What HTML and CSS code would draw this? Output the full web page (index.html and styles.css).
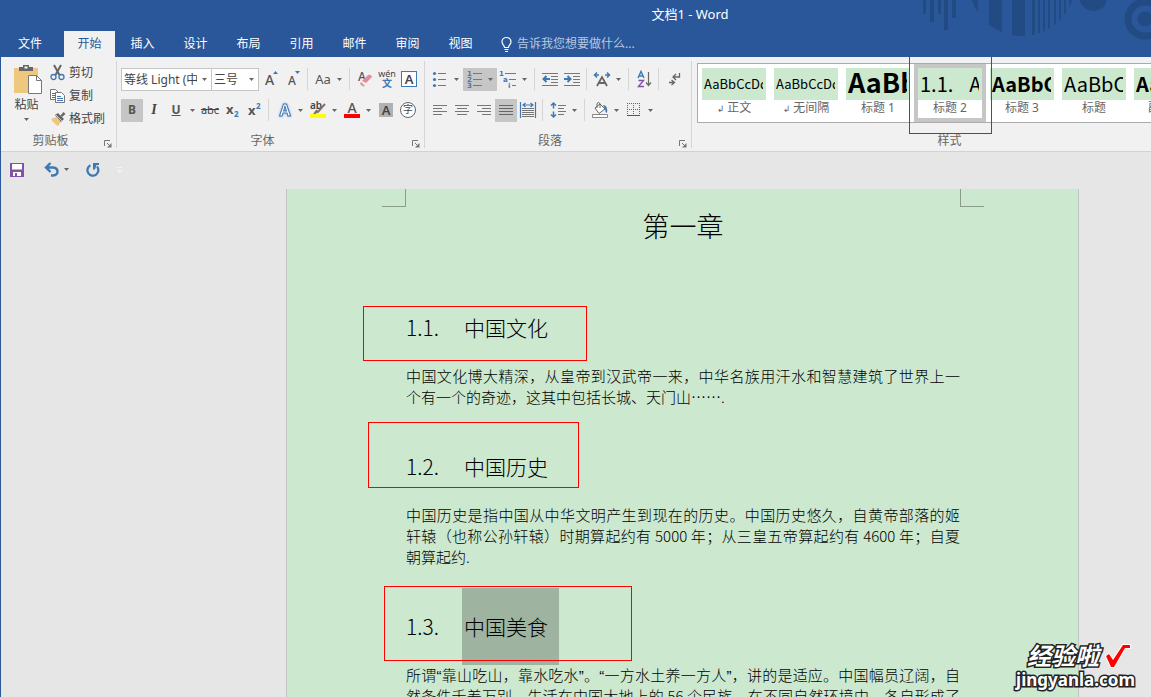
FILE: index.html
```html
<!DOCTYPE html>
<html lang="zh-CN">
<head>
<meta charset="utf-8">
<title>文档1 - Word</title>
<link rel="stylesheet" href="styles.css">
</head>
<body>
<svg class="defs" aria-hidden="true">
  <symbol id="caret" viewBox="0 0 5 3"><path d="M0 0h5L2.500 3z" fill="currentColor"/></symbol>
  <symbol id="launcher" viewBox="0 0 8 8"><path d="M.5 6V.5H6M3 3l3 3" fill="none" stroke="#777"/><path d="M7.500 3v4.500H3z" fill="#777"/></symbol>
</svg>
<div class="app">
  <header class="header">
    <svg class="decor" viewBox="0 0 231 57" aria-hidden="true">
      <defs><clipPath id="disc"><circle cx="102" cy="-17" r="53"/></clipPath></defs>
      <g fill="#234b83">
        <path d="M3 0h3v14H3zM10 0h4v22h-4zM18 0h3v14h-3zM24 0h4v30h-4zM32 0h4v18h-4z"/>
        <path clip-path="url(#disc)" d="M49 0h9v40h-9zM69 0h13v40H69zM92 0h13v40H92zM112 0h3v40h-3zM118 0h2v40h-2zM123 0h2v40h-2zM128 0h2v40h-2zM134 0h2v40h-2zM139 0h2v40h-2zM144 0h2v40h-2zM149 0h3v40h-3z"/>
        <circle cx="173.500" cy="-3" r="14"/>
        <circle cx="225" cy="19" r="7.500"/>
      </g>
      <circle cx="225" cy="19" r="17" fill="none" stroke="#234b83" stroke-width="7"/>
    </svg>
    <h1 class="title">文档1 - Word</h1>
    <nav class="tabs">
      <button class="tab file">文件</button>
      <button class="tab active">开始</button>
      <button class="tab">插入</button>
      <button class="tab">设计</button>
      <button class="tab">布局</button>
      <button class="tab">引用</button>
      <button class="tab">邮件</button>
      <button class="tab">审阅</button>
      <button class="tab">视图</button>
      <button class="tell">
        <svg width="11" height="15" viewBox="0 0 11 15"><path d="M3.500 10.500C3.500 8 1 7.500 1 4.800a4.500 4.300 0 0 1 9 0C10 7.500 7.500 8 7.500 10.500zM3.500 12.500h4M4 14.500h3" fill="none" stroke="#fff" stroke-width="1.200"/></svg>
        <span>告诉我您想要做什么...</span>
      </button>
    </nav>
  </header>

  <section class="ribbon">
    <div class="group clipboard">
      <div class="clip-body">
        <button class="paste">
          <svg width="29" height="31" viewBox="0 0 29 31"><path d="M0 4h24v25H0z" fill="#edc87e"/><path d="M5 7V3h4V1h6v2h4v4z" fill="#666"/><path d="M10.500 2.500h3v2h-3z" fill="#fff"/><path d="M14.500 11.500h8l5 5v13h-13z" fill="#fff" stroke="#777"/><path d="M22.500 11.500v5h5" fill="none" stroke="#777"/></svg>
          <span>粘贴</span>
          <svg class="caret"><use href="#caret"/></svg>
        </button>
        <div class="clip-list">
          <button class="clip-item"><svg width="16" height="16" viewBox="0 0 16 16"><path d="M4 0l5.500 10M11 0L5.500 10" stroke="#666" stroke-width="2" fill="none"/><circle cx="3.500" cy="12" r="2.500" fill="none" stroke="#3f79b5" stroke-width="1.300"/><circle cx="11.500" cy="12" r="2.500" fill="none" stroke="#3f79b5" stroke-width="1.300"/></svg>剪切</button>
          <button class="clip-item"><svg width="16" height="16" viewBox="0 0 16 16"><path d="M.5 1.500h5l3 3v7h-8z" fill="#fff" stroke="#777"/><path d="M2 5.500h3M2 7.500h3M2 9.500h3" stroke="#3f79b5"/><path d="M5.500 4.500h6l3 3v7h-9z" fill="#fff" stroke="#777"/><path d="M7 8.500h4M7 10.500h6M7 12.500h6" stroke="#3f79b5"/></svg>复制</button>
          <button class="clip-item"><svg width="16" height="16" viewBox="0 0 16 16"><path d="M1 8l5-2 5 5-3 4c-1-1-2-1-3-2 0-1-2-1-4-5z" fill="#edc87e"/><path d="M5 4l3-2 6 6-3 3z" fill="#666"/><path d="M10.500 4.500l3-3.500L15.500 3l-3.500 3z" fill="#666"/><path d="M6 4l6 6" stroke="#f1f1f1" stroke-width=".7"/></svg>格式刷</button>
        </div>
      </div>
      <footer class="group-foot"><span>剪贴板</span><button class="launch" aria-label="剪贴板设置"><svg width="8" height="8"><use href="#launcher"/></svg></button></footer>
    </div>

    <div class="group font">
      <div class="row">
        <label class="combo family"><select aria-label="字体"><option>等线 Light (中文标题)</option></select><svg class="caret"><use href="#caret"/></svg></label>
        <label class="combo size"><select aria-label="字号"><option>三号</option></select><svg class="caret"><use href="#caret"/></svg></label>
        <button class="tool" aria-label="增大字号"><svg width="16" height="16" viewBox="0 0 16 16"><text x="2" y="14" class="a14">A</text><path d="M10 3l2.500-3L15 3z" fill="#3f79b5"/></svg></button>
        <button class="tool" aria-label="减小字号"><svg width="16" height="16" viewBox="0 0 16 16"><text x="3" y="14" class="a12">A</text><path d="M10 0h5l-2.500 3z" fill="#3f79b5"/></svg></button>
        <i class="sep"></i>
        <button class="split" aria-label="更改大小写"><span class="tool aa">Aa</span><svg class="caret"><use href="#caret"/></svg></button>
        <i class="sep"></i>
        <button class="tool" aria-label="清除格式"><svg width="16" height="16" viewBox="0 0 16 16"><text x="1" y="10" class="a12">A</text><path d="M5 10l6-6q3-1 4 2l-6 6z" fill="#e88a99"/><path d="M4 11l4 4-2 .5L3 13z" fill="#e88a99"/></svg></button>
        <button class="tool wenbtn" aria-label="拼音指南"><span class="wen">wén</span><span class="wenzi">文</span></button>
        <button class="tool" aria-label="字符边框"><span class="boxed">A</span></button>
      </div>
      <div class="row">
        <button class="tool on bold">B</button>
        <button class="tool italic">I</button>
        <button class="split" aria-label="下划线"><span class="tool under">U</span><svg class="caret"><use href="#caret"/></svg></button>
        <button class="tool strike">abc</button>
        <button class="tool script" aria-label="下标"><svg width="16" height="16" viewBox="0 0 16 16"><text x="2" y="12" class="x">x</text><text x="10" y="15" class="n">2</text></svg></button>
        <button class="tool script" aria-label="上标"><svg width="16" height="16" viewBox="0 0 16 16"><text x="2" y="13" class="x">x</text><text x="10" y="7" class="n">2</text></svg></button>
        <i class="sep"></i>
        <button class="split" aria-label="文本效果"><span class="tool"><svg width="18" height="18" viewBox="0 0 18 18"><text x="10" y="15" text-anchor="middle" class="glow">A</text></svg></span><svg class="caret"><use href="#caret"/></svg></button>
        <button class="split" aria-label="突出显示"><span class="tool"><svg width="18" height="18" viewBox="0 0 18 18"><text x="1" y="8" class="ab">ab</text><path d="M16 3l-7 8-3 1 2-3" fill="none" stroke="#777" stroke-width="2"/><path d="M1 13h16v4H1z" fill="#ff0"/></svg></span><svg class="caret"><use href="#caret"/></svg></button>
        <button class="split" aria-label="字体颜色"><span class="tool"><svg width="18" height="18" viewBox="0 0 18 18"><text x="9" y="12" text-anchor="middle" class="a14">A</text><path d="M1 13h16v4H1z" fill="#f00"/></svg></span><svg class="caret"><use href="#caret"/></svg></button>
        <button class="tool" aria-label="字符底纹"><span class="shaded">A</span></button>
        <button class="tool" aria-label="带圈字符"><span class="ringed">字</span></button>
      </div>
      <footer class="group-foot"><span>字体</span><button class="launch" aria-label="字体设置"><svg width="8" height="8"><use href="#launcher"/></svg></button></footer>
    </div>

    <div class="group para">
      <div class="row">
        <button class="split" aria-label="项目符号"><span class="tool"><svg width="16" height="16" viewBox="0 0 16 16"><g fill="#3f79b5"><circle cx="2.500" cy="2.500" r="1.600"/><circle cx="2.500" cy="8.500" r="1.600"/><circle cx="2.500" cy="14.500" r="1.600"/></g><path d="M6 2.500h8M6 8.500h8M6 14.500h8" stroke="#777"/></svg></span><svg class="caret"><use href="#caret"/></svg></button>
        <button class="split on" aria-label="编号"><span class="tool"><svg width="18" height="18" viewBox="0 0 18 18"><g class="tiny"><text x="2" y="6">1</text><text x="2" y="12">2</text><text x="2" y="18">3</text></g><path d="M8 3.500h9M8 9.500h9M8 15.500h9" stroke="#777"/></svg></span><svg class="caret"><use href="#caret"/></svg></button>
        <button class="split" aria-label="多级列表"><span class="tool"><svg width="18" height="18" viewBox="0 0 18 18"><g class="tiny"><text x="0" y="6">1</text><text x="4" y="12">a</text><text x="9" y="18">i</text></g><path d="M6 3.500h11M10 9.500h7M13 15.500h4" stroke="#777"/></svg></span><svg class="caret"><use href="#caret"/></svg></button>
        <i class="sep"></i>
        <button class="tool" aria-label="减少缩进"><svg width="16" height="14" viewBox="0 0 16 14"><path d="M0 1.500h16M9 4.500h7M9 7.500h7M9 10.500h7M0 13.500h16" stroke="#777"/><path d="M8 7H2M4.500 4l-3 3 3 3" fill="none" stroke="#3f79b5" stroke-width="2"/></svg></button>
        <button class="tool" aria-label="增加缩进"><svg width="16" height="14" viewBox="0 0 16 14"><path d="M0 1.500h16M9 4.500h7M9 7.500h7M9 10.500h7M0 13.500h16" stroke="#777"/><path d="M0 7h6M3.500 4l3 3-3 3" fill="none" stroke="#3f79b5" stroke-width="2"/></svg></button>
        <i class="sep"></i>
        <button class="split" aria-label="中文版式"><span class="tool"><svg width="18" height="16" viewBox="0 0 18 16"><path d="M4 15l5-9 5 9M5.500 12h7" fill="none" stroke="#666" stroke-width="1.800"/><path d="M6 4H2M4 1.500L1.500 4 4 6.500M12 4h4M14 1.500L16.500 4 14 6.500" fill="none" stroke="#3f79b5" stroke-width="1.500"/></svg></span><svg class="caret"><use href="#caret"/></svg></button>
        <i class="sep"></i>
        <button class="tool" aria-label="排序"><svg width="16" height="18" viewBox="0 0 16 18"><path d="M2 8l3-6.500L8 8M3 6h4" fill="none" stroke="#3f79b5" stroke-width="1.400"/><path d="M2.500 10.500h5l-5 6H8" fill="none" stroke="#8551a8" stroke-width="1.400"/><path d="M12.500 2v13M10 12.500l2.500 3 2.500-3" fill="none" stroke="#666" stroke-width="1.200"/></svg></button>
        <i class="sep"></i>
        <button class="tool" aria-label="显示编辑标记"><svg width="14" height="14" viewBox="0 0 14 14"><path d="M12.500 1v4H6M9 2L6 5l3 3M2 10.500h5M4.500 8l3 2.500-3 2.500" fill="none" stroke="#666" stroke-width="1.300"/></svg></button>
      </div>
      <div class="row">
        <button class="tool" aria-label="左对齐"><svg width="14" height="12" viewBox="0 0 14 12"><path d="M0 1.500h14M0 4.500h9M0 7.500h14M0 10.500h9" stroke="#777"/></svg></button>
        <button class="tool" aria-label="居中"><svg width="14" height="12" viewBox="0 0 14 12"><path d="M0 1.500h14M2 4.500h10M0 7.500h14M2 10.500h10" stroke="#777"/></svg></button>
        <button class="tool" aria-label="右对齐"><svg width="14" height="12" viewBox="0 0 14 12"><path d="M0 1.500h14M5 4.500h9M0 7.500h14M5 10.500h9" stroke="#777"/></svg></button>
        <button class="tool on" aria-label="两端对齐"><svg width="14" height="12" viewBox="0 0 14 12"><path d="M0 1.500h14M0 4.500h14M0 7.500h14M0 10.500h14" stroke="#666"/></svg></button>
        <button class="tool" aria-label="分散对齐"><svg width="16" height="16" viewBox="0 0 16 16"><path d="M.5 0v16M15.500 0v16M3 3h10M5.500 1L3 3l2.500 2M10.500 1L13 3l-2.500 2" fill="none" stroke="#3f79b5" stroke-width="1.200"/><path d="M2 6.500h12M2 8.500h12M2 10.500h12M2 12.500h12M2 14.500h12" stroke="#777"/></svg></button>
        <i class="sep"></i>
        <button class="split" aria-label="行距"><span class="tool"><svg width="16" height="16" viewBox="0 0 16 16"><path d="M3.500 1v5.500M1 3.500L3.500 1 6 3.500M3.500 9.500V15M1 12.500L3.500 15 6 12.500" fill="none" stroke="#3f79b5" stroke-width="1.500"/><path d="M8 3.500h8M8 6.500h6M8 9.500h8M8 12.500h6" stroke="#777"/></svg></span><svg class="caret"><use href="#caret"/></svg></button>
        <i class="sep"></i>
        <button class="split" aria-label="底纹"><span class="tool"><svg width="18" height="16" viewBox="0 0 18 16"><path d="M4 6l5-4 5 5-6 4.500z" fill="#fff" stroke="#666"/><path d="M6 6V1.500Q7.500-.5 9 1.500V6" fill="none" stroke="#666"/><path d="M12 3q5 0 4 8-2-1-2-4z" fill="#3f79b5"/><path d="M1.500 12.500h15v3h-15z" fill="#fff" stroke="#888"/></svg></span><svg class="caret"><use href="#caret"/></svg></button>
        <button class="split" aria-label="边框"><span class="tool"><svg width="14" height="14" viewBox="0 0 14 14"><path d="M.5 0v11M6.500 0v11M12.500 0v11M0 .5h13M0 6.500h13" stroke="#666" stroke-dasharray="1 1"/><path d="M0 12.500h13" stroke="#555"/></svg></span><svg class="caret"><use href="#caret"/></svg></button>
      </div>
      <footer class="group-foot"><span>段落</span><button class="launch" aria-label="段落设置"><svg width="8" height="8"><use href="#launcher"/></svg></button></footer>
    </div>

    <div class="group styles">
      <div class="gallery">
        <button class="style"><span class="swatch">AaBbCcDd</span><span class="name"><i>↲</i> 正文</span></button>
        <button class="style"><span class="swatch">AaBbCcDd</span><span class="name"><i>↲</i> 无间隔</span></button>
        <button class="style"><span class="swatch h1">AaBb</span><span class="name">标题 1</span></button>
        <button class="style current"><span class="swatch h2">1.1.<b>A</b></span><span class="name">标题 2</span></button>
        <button class="style"><span class="swatch h3">AaBbC</span><span class="name">标题 3</span></button>
        <button class="style"><span class="swatch h2">AaBbC</span><span class="name">标题</span></button>
        <button class="style"><span class="swatch h3">AaBbC</span><span class="name">副标题</span></button>
      </div>
      <footer class="group-foot"><span>样式</span><i class="launch"></i></footer>
    </div>
  </section>

  <div class="quick">
    <button class="quick-btn" aria-label="保存"><svg width="14" height="14" viewBox="0 0 14 14"><path d="M0 0h14v14H0z" fill="#8551a8"/><path d="M2 1h10v5.500H2zM3 9h8v4H3z" fill="#fff"/><path d="M5 10h2v3H5z" fill="#8551a8"/></svg></button>
    <button class="quick-btn undo" aria-label="撤消"><svg width="16" height="14" viewBox="0 0 16 14"><path d="M2 4.500h7q4.500.5 4.500 4T9 12.500H7M6.500 0L2 4.500 6.500 9" fill="none" stroke="#3f79b5" stroke-width="2.400"/></svg><svg class="caret"><use href="#caret"/></svg></button>
    <button class="quick-btn" aria-label="重复"><svg width="14" height="14" viewBox="0 0 14 14"><path d="M4.500 2.200A5.500 5.500 0 1 0 11 3.500" fill="none" stroke="#3f79b5" stroke-width="2.300"/><path d="M7 0h6v2h-2.500L9 6.500H7z" fill="#3f79b5"/></svg></button>
    <button class="quick-btn faint" aria-label="自定义快速访问工具栏"><svg width="5" height="6" viewBox="0 0 5 6"><path d="M0 0h5v1H0zM0 3h5L2.500 6z" fill="#f4f4f4"/></svg></button>
  </div>

  <main class="workspace">
    <article class="page">
      <div class="corners"><i class="corner left"></i><i class="corner right"></i></div>
      <div class="content">
        <h2 class="chapter">第一章</h2>
        <h3 class="heading"><span class="num">1.1.</span><span>中国文化</span></h3>
        <p class="text"><span class="line">中国文化博大精深，从皇帝到汉武帝一来，中华名族用汗水和智慧建筑了世界上一</span><span class="line last">个有一个的奇迹，这其中包括长城、天门山…….</span></p>
        <h3 class="heading"><span class="num">1.2.</span><span>中国历史</span></h3>
        <p class="text"><span class="line">中国历史是指中国从中华文明产生到现在的历史。中国历史悠久，自黄帝部落的姬</span><span class="line">轩辕（也称公孙轩辕）时期算起约有 5000 年；从三皇五帝算起约有 4600 年；自夏</span><span class="line last">朝算起约.</span></p>
        <h3 class="heading"><span class="num">1.3.</span><span class="selected">中国美食</span></h3>
        <p class="text"><span class="line">所谓<q>靠山吃山，靠水吃水</q>。<q>一方水土养一方人</q>，讲的是适应。中国幅员辽阔，自</span><span class="line">然条件千差万别，生活在中国大地上的 56 个民族，在不同自然环境中，各自形成了</span></p>
      </div>
      <i class="mark m1"></i><i class="mark m2"></i><i class="mark m3"></i>
    </article>
  </main>

  <i class="mark style-mark"></i>
  <div class="brand">
    <div class="brand-top"><span>经验啦</span><svg width="28" height="26" viewBox="0 0 28 26"><path d="M3 13l3-2 4 6L20 2h7v3h-5L11 24H8z" fill="#f00" stroke="#fff" stroke-width="2" paint-order="stroke"/></svg></div>
    <div class="brand-url">jingyanla.com</div>
  </div>
</div>
</body>
</html>
```

FILE: styles.css
```css
* { box-sizing: border-box; }
body {
  margin: 0;
  font: 12px/16px "Noto Sans", "Noto Sans CJK SC", sans-serif;
  color: #444;
}
button {
  margin: 0;
  padding: 0;
  border: 0;
  background: none;
  font: inherit;
  color: inherit;
}
svg { display: block; flex: none; overflow: visible; }
.defs { position: absolute; width: 0; height: 0; }
.app {
  position: relative;
  display: flex;
  flex-direction: column;
  height: 100vh;
  overflow: hidden;
  border-left: 1px solid #2a579a;
  background: #e6e6e6;
}

/* Title bar and tabs */
.header { position: relative; flex: none; background: #2a579a; color: #fff; }
.decor { position: absolute; top: 0; right: 0; width: 231px; height: 57px; overflow: hidden; }
.title {
  margin: 0;
  padding: 0 0 2px 228px;
  font-size: 13px;
  font-weight: 400;
  line-height: 29px;
  text-align: center;
}
.tabs { position: relative; display: flex; gap: 2px; height: 26px; }
.tab { width: 51px; padding-bottom: 1px; }
.tab.file { width: 61px; padding-right: 3px; }
.tab.active { background: #f1f1f1; color: #2a579a; }
.tell { display: flex; align-items: center; gap: 5px; margin-left: 13px; color: #b8c8e0; }

/* Ribbon */
.ribbon {
  display: flex;
  flex: none;
  height: 95px;
  padding-top: 4px;
  overflow: hidden;
  background: #f1f1f1;
  border-bottom: 1px solid #d2d2d2;
}
.group {
  display: flex;
  flex: none;
  flex-direction: column;
  height: 87px;
  border-right: 1px solid #d5d5d5;
}
.clipboard { width: 116px; }
.font { width: 308px; padding-top: 6px; gap: 7px; }
.para { width: 267px; padding-top: 6px; gap: 7px; }
.styles { width: 532px; padding-top: 2px; }
.row { display: flex; flex: none; align-items: center; height: 24px; padding-left: 4px; }
.group-foot { display: flex; align-items: center; margin-top: auto; height: 15px; color: #666; }
.group-foot span { flex: 1; text-align: center; }
.launch { display: flex; align-items: flex-end; justify-content: center; width: 16px; height: 15px; }
.caret { width: 5px; height: 3px; color: #666; }
.sep { width: 8px; height: 22px; background: linear-gradient(#d5d5d5, #d5d5d5) 3px 0 / 1px 100% no-repeat; }
.tool { display: flex; align-items: center; justify-content: center; width: 22px; height: 23px; }
.split { display: flex; align-items: center; width: 34px; height: 23px; gap: 3px; }
.on { background: #c6c6c6; }

.clip-body { display: flex; gap: 7px; padding-left: 12px; }
.clip-list { display: flex; flex-direction: column; height: 69px; }
.paste { display: flex; flex-direction: column; align-items: center; width: 29px; padding: 3px 2px 0 0; }
.paste > svg:first-child { margin-left: 4px; }
.paste span { margin: 2px 0 5px; }
.clip-item { display: flex; align-items: center; gap: 3px; height: 23px; margin-left: 1px; }

.combo { position: relative; height: 23px; border: 1px solid #c6c6c6; background: #fff; }
.combo + .combo { border-left: 0; margin-right: 1px; }
.family { width: 91px; }
.size { width: 47px; }
.combo select {
  width: 100%;
  height: 21px;
  padding: 1px 14px 0 2px;
  border: 0;
  background: none;
  appearance: none;
  font: inherit;
  color: #444;
}
.combo .caret { position: absolute; right: 4px; top: 9px; }
.a14 { font: 500 14px "Noto Sans"; fill: #555; }
.a12 { font: 500 12px "Noto Sans"; fill: #555; }
.aa { font-size: 13px; color: #555; }
.wenbtn { flex-direction: column; }
.wen { font-size: 9px; line-height: 8px; }
.wenzi { font-size: 10px; font-weight: 700; line-height: 10px; color: #3f79b5; }
.boxed { width: 16px; height: 16px; border: 1px solid #3f79b5; background: #fff; font-size: 13px; font-weight: 600; line-height: 14px; }
.bold { font-weight: 700; color: #555; }
.italic { font-family: "Liberation Serif", serif; font-size: 14px; font-style: italic; font-weight: 700; }
.under { font-weight: 700; color: #555; text-decoration: underline; }
.strike { font-size: 11px; text-decoration: line-through; }
.x { font: 700 13px "Noto Sans"; fill: #555; }
.n { font: 700 8px "Noto Sans"; fill: #3f79b5; }
.glow { font: 700 16px "Noto Sans"; fill: #fff; stroke: #3f79b5; stroke-width: 1px; filter: drop-shadow(0 0 1px #8bb5e0); }
.ab { font: 600 10px "Noto Sans"; fill: #444; }
.shaded { width: 14px; height: 14px; background: #b1b1b1; font-size: 13px; font-weight: 600; line-height: 14px; }
.ringed { width: 16px; height: 16px; border: 1px solid #666; border-radius: 50%; background: #fff; font-size: 10px; line-height: 13px; }
.tiny { font: 700 7px "DejaVu Sans"; fill: #3f79b5; }

/* Style gallery */
.gallery { display: flex; height: 60px; margin-left: 5px; border: 1px solid #ababab; background: #fff; }
.style { display: flex; flex: none; flex-direction: column; width: 72px; height: 58px; border: 4px solid transparent; }
.style.current { border-color: #c6c6c6; }
.swatch {
  width: 100%;
  height: 32px;
  padding: 0 0 0 2px;
  overflow: hidden;
  background: #cce8cf;
  border-right: 3px solid #cce8cf;
  color: #000;
  font: 13px/32px "Noto Sans CJK SC", sans-serif;
  text-align: left;
  white-space: nowrap;
}
.swatch.h1 { font-size: 27px; font-weight: 700; line-height: 28px; }
.swatch.h2 { font-size: 20px; }
.swatch.h3 { font-size: 20px; font-weight: 700; }
.swatch b { margin-left: 16px; font-weight: 400; }
.name { width: 100%; color: #666; line-height: 15px; white-space: nowrap; }
.name i { font: 9px/15px "DejaVu Sans"; }

/* Quick access bar */
.quick { display: flex; flex: none; align-items: center; gap: 17px; height: 37px; padding: 0 0 2px 9px; }
.undo { display: flex; align-items: center; gap: 4px; margin-left: 3px; }

/* Document */
.workspace { flex: 1; min-height: 0; padding-left: 285px; overflow: hidden; }
.page {
  position: relative;
  width: 793px;
  min-height: 100%;
  background: #cce8cf;
  border: 1px solid #c0c4c6;
  border-width: 0 1px;
  color: #000;
}
.corners { display: flex; justify-content: space-between; padding: 0 94px 0 95px; }
.corner { width: 24px; height: 18px; border-bottom: 1px solid #8a9c8b; }
.corner.left { border-right: 1px solid #8a9c8b; }
.corner.right { border-left: 1px solid #8a9c8b; }
.content { display: flex; flex-direction: column; padding: 0 118px 0 119px; font-family: "Noto Sans CJK SC", sans-serif; }
.chapter { margin: 0 0 23px; font-size: 27px; font-weight: 300; line-height: 38px; text-align: center; }
.heading { display: flex; margin: 43px 0 22px; font-size: 21px; font-weight: 300; line-height: 32px; }
.num { width: 58px; }
.selected { margin: -22px 0 -23px -2px; padding: 22px 11px 23px 2px; background: #9fb3a1; }
.text { margin: 0; font-size: 15px; font-weight: 300; line-height: 21px; }
.line { display: block; text-align: justify; text-align-last: justify; white-space: nowrap; }
.line.last { text-align-last: left; }
q { quotes: "“" "”"; }
q::before, q::after { font-family: "Liberation Sans", sans-serif; line-height: 1; }

/* Red callout frames */
.mark { position: absolute; border: 1px solid #f00; }
.m1 { left: 76px; top: 117px; width: 224px; height: 55px; }
.m2 { left: 81px; top: 233px; width: 211px; height: 66px; }
.m3 { left: 97px; top: 397px; width: 248px; height: 75px; }
.style-mark { left: 908px; top: 49px; width: 83px; height: 85px; border-color: #e0101c; }

/* Site badge */
.brand {
  position: absolute;
  right: 16px;
  bottom: 6px;
  color: #fff;
  font-family: "Noto Sans", "Noto Sans CJK SC", sans-serif;
  font-weight: 700;
  -webkit-text-stroke: 3px #222;
  paint-order: stroke fill;
}
.brand-top { display: flex; align-items: center; justify-content: flex-end; gap: 4px; font-size: 24px; font-style: italic; line-height: 24px; }
.brand-top svg { margin-right: 4px; }
.brand-url { font-size: 17px; line-height: 22px; }
```
